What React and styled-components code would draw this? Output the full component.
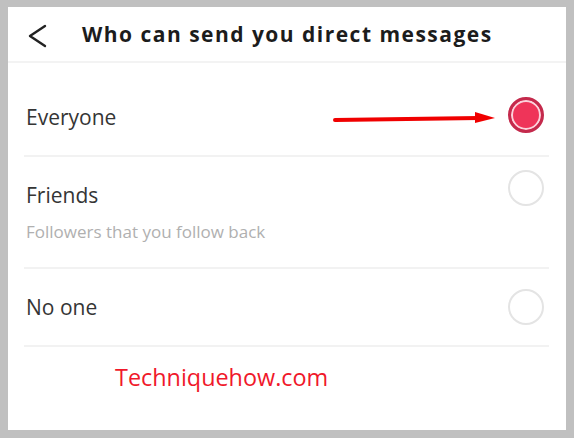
import React from "react";
import styled, { createGlobalStyle } from "styled-components";

const Global = createGlobalStyle`
  html, body {
    margin: 0;
    padding: 0;
    background: #c0c0c0;
  }
  body {
    padding: 7px 8px 8px 8px;
    font-family: "Open Sans", "Liberation Sans", sans-serif;
  }
`;

const Frame = styled.div`
  width: 558px;
  height: 423px;
  background: #ffffff;
  display: flex;
  flex-direction: column;
`;

const Header = styled.div`
  height: 54px;
  display: flex;
  align-items: center;
  padding-left: 20px;
  border-bottom: 2px solid #f3f3f3;
`;

const Back = styled.svg`
  width: 20px;
  height: 24px;
  flex-shrink: 0;
  margin-top: 4px;
`;

const Title = styled.h1`
  margin: 0 0 0 34px;
  font-size: 21px;
  font-weight: 700;
  color: #1c1c1c;
  line-height: 24px;
  letter-spacing: 1.48px;
`;

const List = styled.div`
  margin: 0 17px 0 16px;
  display: flex;
  flex-direction: column;
`;

const Row = styled.div`
  position: relative;
  display: flex;
  align-items: ${(p) => p.$align || "center"};
  justify-content: space-between;
  padding: ${(p) => p.$top}px 5px ${(p) => p.$bottom}px 2px;
  border-bottom: 2px solid #f2f2f2;
`;

const Texts = styled.div`
  display: flex;
  flex-direction: column;
`;

const Label = styled.span`
  font-size: 21px;
  line-height: 24px;
  color: #353535;
  margin-top: ${(p) => p.$drop || 0}px;
`;

const Hint = styled.span`
  margin-top: 15px;
  font-size: 17px;
  line-height: 20px;
  color: #b0b0b0;
`;

const Radio = styled.span`
  box-sizing: border-box;
  width: 36px;
  height: 36px;
  border-radius: 50%;
  flex-shrink: 0;
  margin-top: ${(p) => p.$shift || 0}px;
  border: ${(p) => (p.$checked ? "3px solid #c42a4c" : "2px solid #e4e4e4")};
  background: ${(p) => (p.$checked ? "#ef3459" : "transparent")};
  box-shadow: ${(p) => (p.$checked ? "inset 0 0 0 2px #fbd3dc" : "none")};
`;

const Arrow = styled.svg`
  position: absolute;
  left: 309px;
  top: 47px;
  width: 166px;
  height: 14px;
`;

const Footer = styled.div`
  padding: 15px 0 0 107px;
`;

const Mark = styled.span`
  font-size: 23.4px;
  line-height: 30px;
  color: #f0182a;
`;

export default function App() {
  return (
    <>
      <Global />
      <Frame>
        <Header>
          <Back viewBox="0 0 20 24">
            <polyline
              points="17,2 2,12 17,22"
              fill="none"
              stroke="#222"
              strokeWidth="2.4"
              strokeLinecap="round"
              strokeLinejoin="round"
            />
          </Back>
          <Title>Who can send you direct messages</Title>
        </Header>
        <List>
          <Row $top={34} $bottom={22}>
            <Label $drop={4}>Everyone</Label>
            <Radio $checked />
            <Arrow viewBox="0 0 166 14">
              <line x1="2" y1="10" x2="146" y2="8" stroke="#f00000" strokeWidth="4" strokeLinecap="round" />
              <polygon points="142,2 162,8 142,13" fill="#f00000" />
            </Arrow>
          </Row>
          <Row $top={26} $bottom={25} $align="flex-start">
            <Texts>
              <Label>Friends</Label>
              <Hint>Followers that you follow back</Hint>
            </Texts>
            <Radio $shift={-13} />
          </Row>
          <Row $top={20} $bottom={20}>
            <Label>No one</Label>
            <Radio />
          </Row>
        </List>
        <Footer>
          <Mark>Techniquehow.com</Mark>
        </Footer>
      </Frame>
    </>
  );
}
